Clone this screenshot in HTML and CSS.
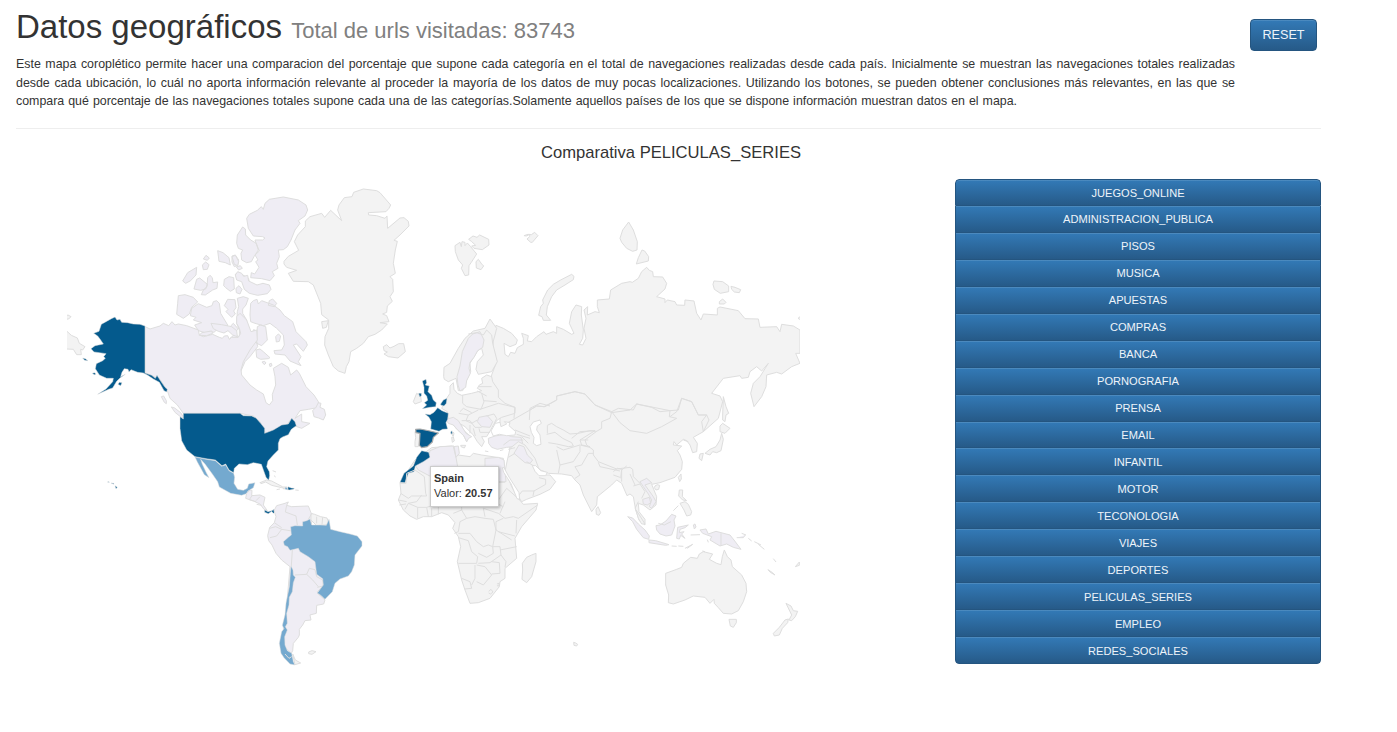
FILE: index.html
```html
<!DOCTYPE html>
<html lang="es">
<head>
<meta charset="utf-8">
<title>Datos geográficos</title>
<link rel="stylesheet" href="styles.css">
</head>
<body>
<main class="page">
<header class="header">
<div class="intro">
<h1 class="title">Datos geográficos <small class="subtitle">Total de urls visitadas: 83743</small></h1>
<p class="description">
<span class="line">Este mapa coroplético permite hacer una comparacion del porcentaje que supone cada categoría en el total de navegaciones realizadas desde cada país. Inicialmente se muestran las navegaciones totales realizadas</span>
<span class="line">desde cada ubicación, lo cuál no aporta información relevante al proceder la mayoría de los datos de muy pocas localizaciones. Utilizando los botones, se pueden obtener conclusiones más relevantes, en las que se</span>
<span class="line line-last">compara qué porcentaje de las navegaciones totales supone cada una de las categorías.Solamente aquellos países de los que se dispone información muestran datos en el mapa.</span>
</p>
</div>
<button class="button reset">RESET</button>
</header>
<h2 class="chart-title">Comparativa PELICULAS_SERIES</h2>
<section class="content">
<div class="map">
<svg class="world" viewBox="67 180 733 500" width="733" height="500">
<!-- Arctic archipelago, west -->
<g class="low" transform="translate(60 180) scale(.333333)">
<path d="M430 237l8-11 10 8-6 7zM427 255l10-9 10 8-5 14-12 1zM473 212L489 218L507 233L511 255L496 248L477 244zM516 228l10-3 10 15-3 16-10 4-7-14zM529 261l12-4 6 8-11 5zM368 303L383 278L410 262L408 285L392 302L377 310zM402 327L410 298L419 294L442 313L437 327L422 331zM443 293L450 286L457 293L459 308L473 306L471 325L458 330L436 345L424 344L430 330L441 320zM491 317L493 298L507 290L521 293L523 327L511 334L497 323zM526 283L536 277L549 285L566 296L572 335L556 330L548 300L530 295zM528 325L537 317L546 328L540 342L529 338zM355 347L375 344L400 352L413 366L395 382L388 402L370 415L350 403L353 370zM395 385L415 371L440 382L456 377L460 365L470 362L478 370L482 400L503 435L501 444L475 445L462 457L450 454L438 459L415 452L404 435L425 428L400 420L408 412L391 407zM493 377L503 358L525 359L528 383L521 393L526 402L515 412L498 395L504 388zM512 438L520 430L535 447L526 455L512 448z"/>
</g>
<!-- Baffin, Ellesmere, Greenland, Iceland -->
<g transform="translate(230 180) scale(.333333)">
<path class="low" d="M50 115L58 103L82 91L94 80L100 88L105 70L118 58L160 51L205 60L228 75L233 90L225 108L205 122L210 130L195 150L183 180L172 200L160 209L145 210L148 230L140 250L144 265L127 275L133 287L120 302L95 296L62 293L64 278L74 282L87 262L77 245L84 240L75 225L88 213L79 192L75 180L98 180L105 174L98 170L70 168L55 145zM20 190L22 165L38 141L46 147L47 165L62 180L79 190L85 210L72 230L64 245L50 248L35 240L33 220L38 210L25 205zM6 230l10-4 10 18-3 13-10-4zM16 285L23 275L35 280L41 289L53 286L56 303L81 315L99 310L118 315L123 328L112 341L83 346L58 340L43 328L35 305L20 300zM22 355L40 350L55 355L48 375L38 387L38 400L50 420L48 440L65 460L72 448L78 470L73 482L80 485L83 500L60 530L45 545L32 575L30 600L0 600V475L12 465L28 470L28 450L20 430L22 395L26 380zM60 405L62 370L70 362L81 358L85 372L95 362L130 375L150 390L163 407L188 425L198 455L228 485L232 495L220 514L200 492L190 495L213 530L205 545L213 557L180 543L165 525L135 522L132 512L155 510L163 495L160 465L140 445L120 430L100 437L75 430L62 425zM82 440L92 435L107 440L112 480L95 497L80 490zM118 362L128 357L140 370L133 380L115 376zM137 470l8-8 7 6-4 16-9 2zM78 510L90 507L100 515L120 533L115 536L92 538L80 532zM96 546l8-2 4 5-5 5zM118 552l6-2 2 7-6 3z"/>
<path class="land" d="M162 244L175 229L206 211L193 185L203 165L226 140L226 123L240 110L275 100L284 112L302 91L335 122L323 90L327 75L343 53L366 50L371 37L400 27L440 32L450 38L482 75L477 85L468 95L415 98L416 105L440 107L465 115L471 108L473 145L510 114L522 113L535 124L537 138L510 165L492 181L502 184L496 210L490 250L496 280L480 290L488 298L490 335L480 350L487 364L472 378L470 397L458 402L470 407L477 425L450 428L472 432L455 450L435 463L415 470L400 490L380 505L362 515L357 545L349 560L345 580L325 573L310 560L295 525L284 495L285 470L296 445L296 420L275 404L272 370L250 315L235 305L190 304L175 280L200 271L170 262L162 252zM275 425l20-3-6 20-11 3zM460 500L470 494L480 504L492 499L506 491L521 491L526 515L504 534L475 530L462 522L472 516L462 512z"/>
</g>
<!-- North America -->
<g transform="translate(60 300) scale(.333333)">
<path class="low" d="M255 80L270 87L300 78L310 70L326 77L336 65L345 75L355 72L380 77L415 90L418 105L430 110L458 103L478 112L487 115L493 108L503 107L508 118L515 112L535 112L542 100L538 85L530 70V50L540 40L560 60L573 95L590 90L592 120L570 150L550 185L543 210L545 225L570 255L590 270L610 282L618 308L628 315L638 302L637 283L647 255L645 230L640 205L665 190L685 202L692 225L710 210L718 220L738 260L762 285L775 305L777 322L745 328L720 332L705 355L725 342L725 365L750 370L725 385L705 378L695 355L680 375L650 387L617 400L612 390L600 365L580 348L540 340L370 340L352 315L330 295L322 272L300 238L255 218z"/>
<path class="low" d="M425 98L455 93L458 100L440 107L418 106zM453 70L485 74L515 80L530 92L532 110L518 105L504 92L492 99L475 94L460 86z"/>
<path class="low" d="M304 290l7-2 8 14 0 9-6-4zM334 321l10 3 18 14 9 15-6 0-20-16zM758 332L768 322L775 308L783 310L780 322L793 328L797 345L790 360L776 354L762 350z"/>
<path class="land" d="M14 50l10-5 9 5-7 7-13 1zM10 84L34 106L52 114L58 130L75 140L68 150L62 148L64 164L50 164L40 148L20 147L10 140z"/>
<path class="high" d="M255 78V219L275 226L286 235L291 226L300 240L315 262L322 268L320 276L312 272L298 247L280 237L262 225L250 219L233 217L213 209L207 216L204 208L193 206L186 217L182 230L196 223L181 233L170 244L158 264L146 268L113 283L138 267L158 245L160 235L140 235L118 225L106 206L109 191L128 182L136 175L131 170L138 161L118 158L102 156L93 146L105 137L130 132L122 120L113 108L101 100L117 94L124 73L138 65L154 56L165 51L171 60L180 58L185 67L203 68L220 72L240 73zM174 253l4-6 8 1-4 9zM68 174l8 2 8 6-10-1zM97 220l6-2 5 4-5 2z"/>
<path class="high" d="M370 340H540L550 347L575 348L588 354L602 370L614 385V400L640 390L665 375L685 372L695 355L705 365L709 377L694 388L685 404L668 411L660 416L655 430V450L640 465L624 483L620 500L628 515L629 527L626 541L618 532L612 515L604 493L580 488L562 494L537 492L523 505L521 518L507 510L497 492L486 497L466 480L438 476L405 470L380 450L365 422L360 385V350L370 357z"/>
<path class="mid" d="M405 471L438 478L466 482L485 499L497 495L507 512L521 520L524 532L522 550L533 568L550 571L562 565L566 552L585 548L580 563L564 573L559 581L545 586L512 580L478 561L473 545L457 522L435 492L422 478L427 493L439 518L447 533L433 524L422 504L412 486z"/>
<path class="high" d="M142 546l5-1 1 2zM153 549l8 1 1 3zM165 557l7 5-4 4z"/>
<path class="low" d="M560 580L570 570L576 571L575 587L600 585L615 592L610 615L622 632L612 628L600 612L580 603L557 595z"/>
<path class="line" d="M576 587l-8 12 20 6M600 590l-12 12M590 613l15 3"/>
<path class="land" d="M600 548l20-8 15 3 32 17-2 3-30-7-18-10-14 5zM638 512l10 4M642 527l5 4M650 569l10-2M668 561l13 0 0 6-12-1zM706 570l10 1"/>
<path class="mid" d="M675 562l8 2 0 6-8-3z"/><path class="high" d="M684 560l10 4 9 1-3 3-12 2-4-1zM614 630L624 635L635 632L643 628L645 636L640 640L635 634L625 641L614 637z"/>
</g>
<!-- South America -->
<g transform="translate(230 360) scale(.333333)">
<path class="low" d="M113 527L119 502L133 488L138 470L132 452L140 437L165 430L175 426L170 436L185 440L235 438L243 458L250 470L230 540L260 600L280 650L283 675L262 695L265 702L285 720L281 732L260 736L259 760L240 765L243 780L225 782L218 795L208 808V825L205 832L190 850L188 872L184 880L162 860L160 800L170 740L180 620L155 600L138 580L126 555L116 542z"/>
<path class="land" d="M243 460L254 463L272 470L291 474L298 494L260 497L243 480z"/>
<path class="line" d="M170 436l-4 20 32 12 4 27M119 505l18-5 18 8-15 20-20 5M155 508l30 5M133 488l22 15M245 461l-10 17M260 470v20M278 472l-2 22M187 570l-3 48M195 645L230 643L238 625L255 629L260 650L278 660L280 678L262 682M230 643L248 660L265 680M263 700l20 15"/>
<path class="mid" d="M160 545L175 532L184 525L182 500L195 497L218 498L218 485L230 482L240 477L245 495L270 495L289 496L297 478L302 508L330 515L360 522L382 528L396 545V558L375 585L373 615L365 635L355 648L330 657L315 670L307 695L285 718L274 707L262 699L280 675L278 656L260 643L255 605L235 590L210 575L205 565L180 571L173 560L163 556z"/>
<path class="mid" d="M183 618L189 630L190 645L196 652L190 668L187 695L178 712L177 735L170 760L172 790L166 800L172 810L164 830L165 855L172 872L185 880L190 905L195 915L180 912L162 893L153 880L148 850L155 815L162 806L157 796L165 765L168 730L178 680L181 640z"/>
<path class="land" d="M188 882L196 900L212 909L195 914zM236 876l10-4 12 3-12 8-10-2z"/>
<path class="line" d="M165 882l12 13 8-5"/>
</g>
<!-- Svalbard, Novaya Zemlya, Siberia -->
<g class="land" transform="translate(440 215) scale(.333333)">
<path d="M45 92L60 82L64 95L66 80L75 82V92L82 84L92 95L110 117L94 142L87 152L86 180L75 182L64 160L68 150L55 135L46 110zM86 73l13-10 12 4 8-7 27 13 1 17-20 14-25-4-7-7 12-2-13-12zM108 140l7-7 10 14 6 6-8 11-14-5zM252 62l12-4 10 1 10-7 10 10-17 20-5 0-11-10 8-7 0-7-10 5zM296 301L302 275L310 265L308 255L323 225L340 208L362 195L395 178L402 184L400 194L375 210L350 225L335 245L322 275L319 300L332 316L310 316L306 305z"/>
<path d="M180 650V560L150 520L155 480L170 440L160 400L158 365L165 345L168 331L190 340L215 355L232 375L228 388L210 395L192 385L195 418L205 425L212 412L225 415L232 398L250 388V370L245 355L265 362L262 378L275 380L290 365L312 350L318 358L340 350L350 355V335L370 343L395 358L402 355L388 325L395 290L408 270L425 275L424 300L430 345L428 370L418 388L428 390L438 370L432 340L438 310L432 285L443 275L442 300L465 290L478 293L472 275V255L508 252L512 225L545 205L570 200L577 202L595 190L605 170L620 157L628 166L638 170L640 185L668 186L680 205L675 222L650 245L675 252V263L682 255L705 260L710 270L734 271L735 255L762 258L770 295L783 315L790 297L832 300V280L840 276L895 287L915 311L955 312L960 337L1010 335L1020 350L1025 328L1060 333L1080 345V415L1067 415L1080 445L1055 455L1025 477L1010 472L980 480L978 515L965 545L942 575L932 535L940 505L960 485L985 445L965 468L950 455L930 470L925 487L905 490L900 482L850 490L815 535L840 543L848 560L835 610L790 650"/>
<path class="land" d="M540 70L548 45L566 21L580 45L592 80L591 105L578 109L560 100L545 82zM589 147L595 128L606 105L614 108L626 125L625 138zM819 208l3-10 26 2 18 13 0 17-25 5-18-12zM873 214l12 3 17 7-4 9-15-2-8-8zM838 260l10-8 10 10-5 5-15 0zM1074 310l10-8v14z"/>
</g>
<!-- Asia and Oceania -->
<g class="land" transform="translate(530 390) scale(.333333)">
<path class="fill" d="M-70 100L0 60L20 48L45 50L80 30L80 18L135 5L165 12L195 45L245 68L300 60L320 42L420 62L445 60L455 25L485 35L505 75L530 75L537 90L520 125L490 142L502 160L500 185L488 188L480 165L470 152L460 148L440 165L432 155L430 165L455 168L442 182L450 195L457 215L455 238L435 262L390 278L365 283L380 320L378 345L360 360L340 345L325 340L327 365L345 388V405L328 392L317 360L310 320L300 312L291 317L275 280L260 270L245 285L202 320L200 345L185 365L160 315L150 285L135 270L125 257L95 252L55 250L20 235L0 215L-60 180z"/>
<path class="line" d="M0 60L20 48L42 50L80 30L80 18L135 5L165 12L195 45L245 65L240 85L215 95V115L200 124L180 122L145 130L120 132L100 120L80 110L65 100L52 106V130M245 65L265 55L310 60L320 42L365 52L390 65L420 62L418 80L440 85L395 110L350 130L300 122L270 98L245 65M200 124L185 135L165 150L170 165L190 180V195L205 215L260 237L300 232L308 238L310 260L330 280L350 267L365 280M420 80L440 65L455 25L485 35L505 75L530 75L515 95L520 125M50 133L75 127L98 145L125 158L130 168L115 170L80 162L55 158M125 145L150 125L195 122L150 150L175 150M150 150L155 165L180 170M80 170L100 180L150 165L180 172M80 180L90 225L130 215L150 185L150 168M90 225L85 250M190 190L175 190L155 225L135 230L150 255L135 265M205 217L210 230L270 243M250 245L262 235L275 238L272 265M250 255L270 262M290 228L275 240L275 275M300 252L315 285M310 288L330 282L345 305L335 325M315 355L325 335M475 155L460 150"/>
<path class="low" d="M330 275L350 265L365 278L345 285L370 320L378 335L365 355L358 350L365 330L355 312L340 290zM338 328L358 322L362 338L352 345L340 342z"/>
<path d="M375 288l7-4 7 2-3 12-8 2-5-7zM445 262l8-10 1 15-5 8zM198 358l6-8 8 18-5 8-8-3zM578 75L580 20L588 50L596 70L588 75L585 95L578 90zM570 108L578 100L600 115L585 130L570 125zM575 130L580 148L573 182L560 188L548 185L540 195L525 190L540 178L558 170L570 150zM510 192L520 190L515 212L507 205zM448 300L458 300L457 320L470 332L458 330L446 318zM430 362l15-15M450 340L465 335L475 343L485 365L482 375L470 378L462 360zM318 360L330 378L345 402L335 402L325 385z"/>
<path class="low" d="M293 380L308 384L325 402L345 420L358 438L356 448L340 443L320 418L308 395zM378 407L390 405L408 393L425 373L438 378L432 390L435 408L425 435L408 438L390 432L380 420zM357 450l20 2 40 12-10 2-50-8zM425 468l15 1M445 468l15 1M465 475L488 463L472 475M440 445L443 412L475 405L465 413L450 418L448 428L462 425L455 432L465 445L452 436L448 447zM490 405l5-3 3 9-5 6zM482 435l28-1M510 420L528 417L535 432L558 424L600 435L612 450L633 478L610 472L590 462L570 468L540 450L545 440L518 430zM532 449l3 8M620 443l20 0 6-8M635 430l13 5"/>
<path class="line" d="M573 430v38M385 400l18 5 20-10"/>
<path d="M655 445l10 8M673 455l20 10M685 463l18 15M730 506l8 10M714 539l12 8 9 8-14-8zM796 530l12-14 0 10-12 4M407 550L440 538L455 532L460 520L482 502L502 505L508 492L520 485L548 492L538 508L560 520L573 524L577 500L583 480L592 500L603 510L607 530L635 555L648 580L650 605L640 635L625 662L605 672L580 670L565 653L553 640L552 628L540 640L525 622L490 618L465 630L430 642L415 638L416 615L407 585zM517 483l8 2M597 688l22 0 0 10-9 14-9-4zM768 640L783 648L790 662L803 664L796 680L785 692L777 690L785 675zM730 730L748 712L765 690L775 687L773 698L757 715L748 735L733 738zM131 757l6 2 6 4-3 5-8-2z"/>
</g>
<!-- Europe -->
<g class="land" transform="translate(390 330) scale(.333333)">
<path d="M161 140L162 112L180 100L205 55L225 25L250 3L285-5L300-33L320-5L315 15L308 40L322 95L305 125L265 133L258 118L262 95L280 75L275 55L263 62L240 100L242 125L230 150L218 182L205 182L198 145L175 155L163 148z"/>
<path class="low" d="M201 140L210 108L217 65L235 25L248 12L270 5L282 30L278 52L263 62L252 82L240 97L237 115L241 130L230 152L227 172L210 183L204 165z"/>
<path class="line" d="M235 12L260 8L280 15L290 0L305 15L308 40"/>
<path d="M180 190V168L190 158L192 178L202 190L215 196L245 190L275 182L262 175L268 165L278 160L275 145L290 135L305 140L308 155L325 180L325 202L345 220L375 232L375 250L335 262L322 270L310 285L302 300L290 320L275 320L283 335L275 350L262 335L250 315L225 290L212 282L220 300L240 318L232 325L230 335L220 315L200 297L190 285L175 270L172 245L155 235L170 205z"/>
<path class="low" d="M168 268L190 262L205 272L213 285L228 310L245 320L236 325L230 335L222 318L203 300L190 285L175 280zM267 262L292 257L308 275L300 292L275 290L262 275z"/>
<path class="line" d="M218 195V220L230 230L273 238L282 215L275 190M210 245L220 235L245 248M206 250L235 255L265 240M235 255L228 272L245 280L262 270M215 272L240 272L255 292H275M240 285V310M267 295L270 307H300M250 295L256 318M280 212L320 215M262 183L290 198M265 170H305M270 238L325 220L375 232M290 258L312 252L320 265"/>
<path d="M70 215L80 190L92 198L94 215L75 222zM189 306l3 3-2 10-4-4zM185 322l5-1 3 12-6 4zM212 346l15 0-4 8-10-4zM285 363l10 2M330 362l10-3"/>
<path class="high" d="M97 153L108 148L110 158L106 165L118 168L114 185L125 196L130 210L139 218L137 230L120 232L97 236L110 225L103 218L113 211L110 198L102 190V172zM86 190l8 0 0 8-5 2zM152 222L160 210L171 205L169 220L162 228L152 225zM105 252L120 254L132 247L143 233L156 242L175 250L173 268L168 278L173 297L158 298L147 304L122 297L124 275L117 262zM182 306l4-4 1 8-4 3z"/>
<path d="M75 305l15 3-5 42-10 0 0-15 2-12z"/>
<path class="high spain" d="M77 298L90 297L120 303L145 309L130 322L127 336L112 350L95 353L88 346L90 310L78 308z"/>
<path class="low" d="M295 325L315 318L345 313L365 320L393 322L398 340L388 348L350 352L322 358L305 352L296 340z"/>
<path class="sea" d="M303 303L316 280L330 277L333 290L350 282L343 275L360 278L357 287L377 305L375 315L350 317L328 313L310 318z"/>
<path class="sea" d="M420 290L430 276L450 270L454 280L442 288L440 300L450 315L453 343L440 347L430 340L432 322L424 307z"/>
<path class="line" d="M418 270L420 235L450 220L480 228M375 300L420 318M380 313L420 325M395 320L415 340M320 265L312 282M375 232L372 265"/>
</g>
<!-- Africa and the Middle East -->
<g class="land" transform="translate(390 450) scale(.333333)">
<path d="M30 98L75 30L125-7L185-12L205-5V15L240 20L250 10L275 15L340 25L345 60L365 110L385 145L400 163L443 160L438 180L395 230L375 265L380 325L345 355V385L330 395L328 410L300 445L265 458L240 460L225 420L215 390L202 335L212 290L205 260L188 235L195 218L175 195L155 188L125 200L100 200L80 208L60 198L40 180L25 150L33 130z"/>
<path class="low" d="M120 2L150-10L192-12L198 22L205 62L180 95L165 102L85 60L75 45L115 25zM198 22L190-10L205-12L208 10zM285 25L325 22L342 30L345 60L348 95H285z"/>
<path class="high" d="M95 2L116 7L120 22L100 35L76 48L72 65L55 70L45 98L30 97L42 70L70 48L80 22z"/>
<path class="line" d="M30 100H48L50 70L75 60L103 80L107 130L110 138H65L55 145L32 130M95 135L80 155L55 160L45 178M55 160L83 172V205M83 172H110L115 200M110 172L165 155L195 140M125 175V200M145 170V193M270 97V155L310 155L340 170M270 97H345M190 190L215 180V140M215 180L230 205L210 215L205 245L193 250M230 205L255 200L285 205L310 208L318 240L308 290L295 285L280 290L260 275L240 250L205 250M285 200L280 175L325 190L345 205L370 200L385 205L443 165M325 150L350 115L395 155M340 205L318 215L318 240L365 270M325 245L375 258M380 210L378 250M345 155L330 190M205 263L235 272L245 305L263 320L260 340L205 340M265 310L290 322L310 310L308 290L330 290L333 315L300 338L265 340M255 345V385L245 405M260 395L280 405L305 375L285 350L260 345M305 335L328 338L330 370L305 372M333 315L348 335L345 352M380 290L330 300M296 424l7-6 6 8-7 6-6-3M321 402l6-2 0 8-6-1M215 385L240 395L245 415L225 417M25 150L50 155M28 165L48 162"/>
<path d="M352 30L360-5L385-25L405-15L435 25L445 52L460 75L480 75L497 95L480 118L450 133L410 148L395 155L385 140L365 100L345 65zM398 360L397 340L410 322L425 315L438 310L438 335L425 380L410 398L396 388z"/>
<path class="low" d="M372 10L387-15L402-10L412 15L428 30L420 40L405 38z"/>
<path class="line" d="M340-15l20-15 40 0M355-2l20-5M375 10l-20 12M410 35l25 15M385 138l12-15 35 0 35-20 0-15-20-5M432 123l-3 15"/>
<path class="sea" d="M427 47l10 0 15 15 20 5-5 10-20 0-12-13z"/>
<path class="sea" d="M337 53l5 0 15 28 30 47 2 20-8-2-18-45-22-34z"/>
</g>
</svg>
<div class="tooltip"><b>Spain</b><br>Valor: <b>20.57</b></div>
</div>
<nav class="categories">
<button class="button">JUEGOS_ONLINE</button>
<button class="button">ADMINISTRACION_PUBLICA</button>
<button class="button">PISOS</button>
<button class="button">MUSICA</button>
<button class="button">APUESTAS</button>
<button class="button">COMPRAS</button>
<button class="button">BANCA</button>
<button class="button">PORNOGRAFIA</button>
<button class="button">PRENSA</button>
<button class="button">EMAIL</button>
<button class="button">INFANTIL</button>
<button class="button">MOTOR</button>
<button class="button">TECONOLOGIA</button>
<button class="button">VIAJES</button>
<button class="button">DEPORTES</button>
<button class="button">PELICULAS_SERIES</button>
<button class="button">EMPLEO</button>
<button class="button">REDES_SOCIALES</button>
</nav>
</section>
</main>
</body>
</html>
```
FILE: styles.css
```css
* { box-sizing: border-box; }
body {
  margin: 0;
  background: #fff;
  color: #333;
  font-family: "Liberation Sans", Arial, sans-serif;
}
.page { width: 1321px; height: 732px; padding-left: 16px; }
.header {
  display: flex;
  justify-content: space-between;
  align-items: flex-start;
  height: 129px;
  border-bottom: 1px solid #eee;
}
.intro { width: 1219px; }
.title { margin: 8px 0 5px; font-size: 33px; line-height: 38px; font-weight: 400; white-space: nowrap; }
.subtitle { font-size: 22px; color: #808080; }
.description { margin: 0; font-size: 12.4px; line-height: 18.5px; }
.line { display: block; white-space: nowrap; text-align: justify; text-align-last: justify; }
.line-last { width: 1001px; }
.button {
  display: block;
  margin: 0;
  padding: 0;
  border: 1px solid #245580;
  color: #eef4fa;
  background: linear-gradient(#337ab7, #265a88);
  box-shadow: inset 0 1px 0 rgba(255, 255, 255, .12);
  font-family: inherit;
  font-size: 11.1px;
  text-align: center;
}
.reset { width: 67px; height: 32px; margin: 19px 4px 0 0; border-radius: 4px; font-size: 12.6px; }
.chart-title { margin: 14px 0 0 5px; font-size: 16.6px; line-height: 20px; font-weight: 400; text-align: center; }
.content { display: flex; justify-content: space-between; padding: 17px 0 0 51px; }
.map { position: relative; width: 733px; height: 500px; }
.world { display: block; }
.world path { vector-effect: non-scaling-stroke; stroke: #dedede; stroke-width: 1; stroke-linejoin: round; }
.land { fill: #f3f3f3; }
.low { fill: #efedf4; }
.mid { fill: #74a9cf; }
.high { fill: #045a8d; }
.world .mid, .world .high { stroke-width: .5; }
.world .line { fill: none; }
.world .fill { stroke-width: 1; }
.world .sea { fill: #fff; }
.world .spain { stroke: #aaa; stroke-width: 1.2; }
.tooltip {
  position: absolute;
  left: 363px;
  top: 286px;
  width: 69px;
  height: 41px;
  padding: 4px 3px;
  border: 1px solid #ccc;
  background: #fff;
  box-shadow: 1px 1px 3px rgba(0, 0, 0, .3);
  font-size: 11px;
  line-height: 15px;
  white-space: nowrap;
}
.categories { display: grid; grid-template-rows: repeat(18, 1fr); width: 366px; height: 485px; margin-top: -1px; border-radius: 4px; overflow: hidden; }
.categories .button { border-top-width: 0; padding-top: 1px; }
.categories .button:first-child { border-top-width: 1px; border-radius: 4px 4px 0 0; }
.categories .button:last-child { border-radius: 0 0 4px 4px; }
```
